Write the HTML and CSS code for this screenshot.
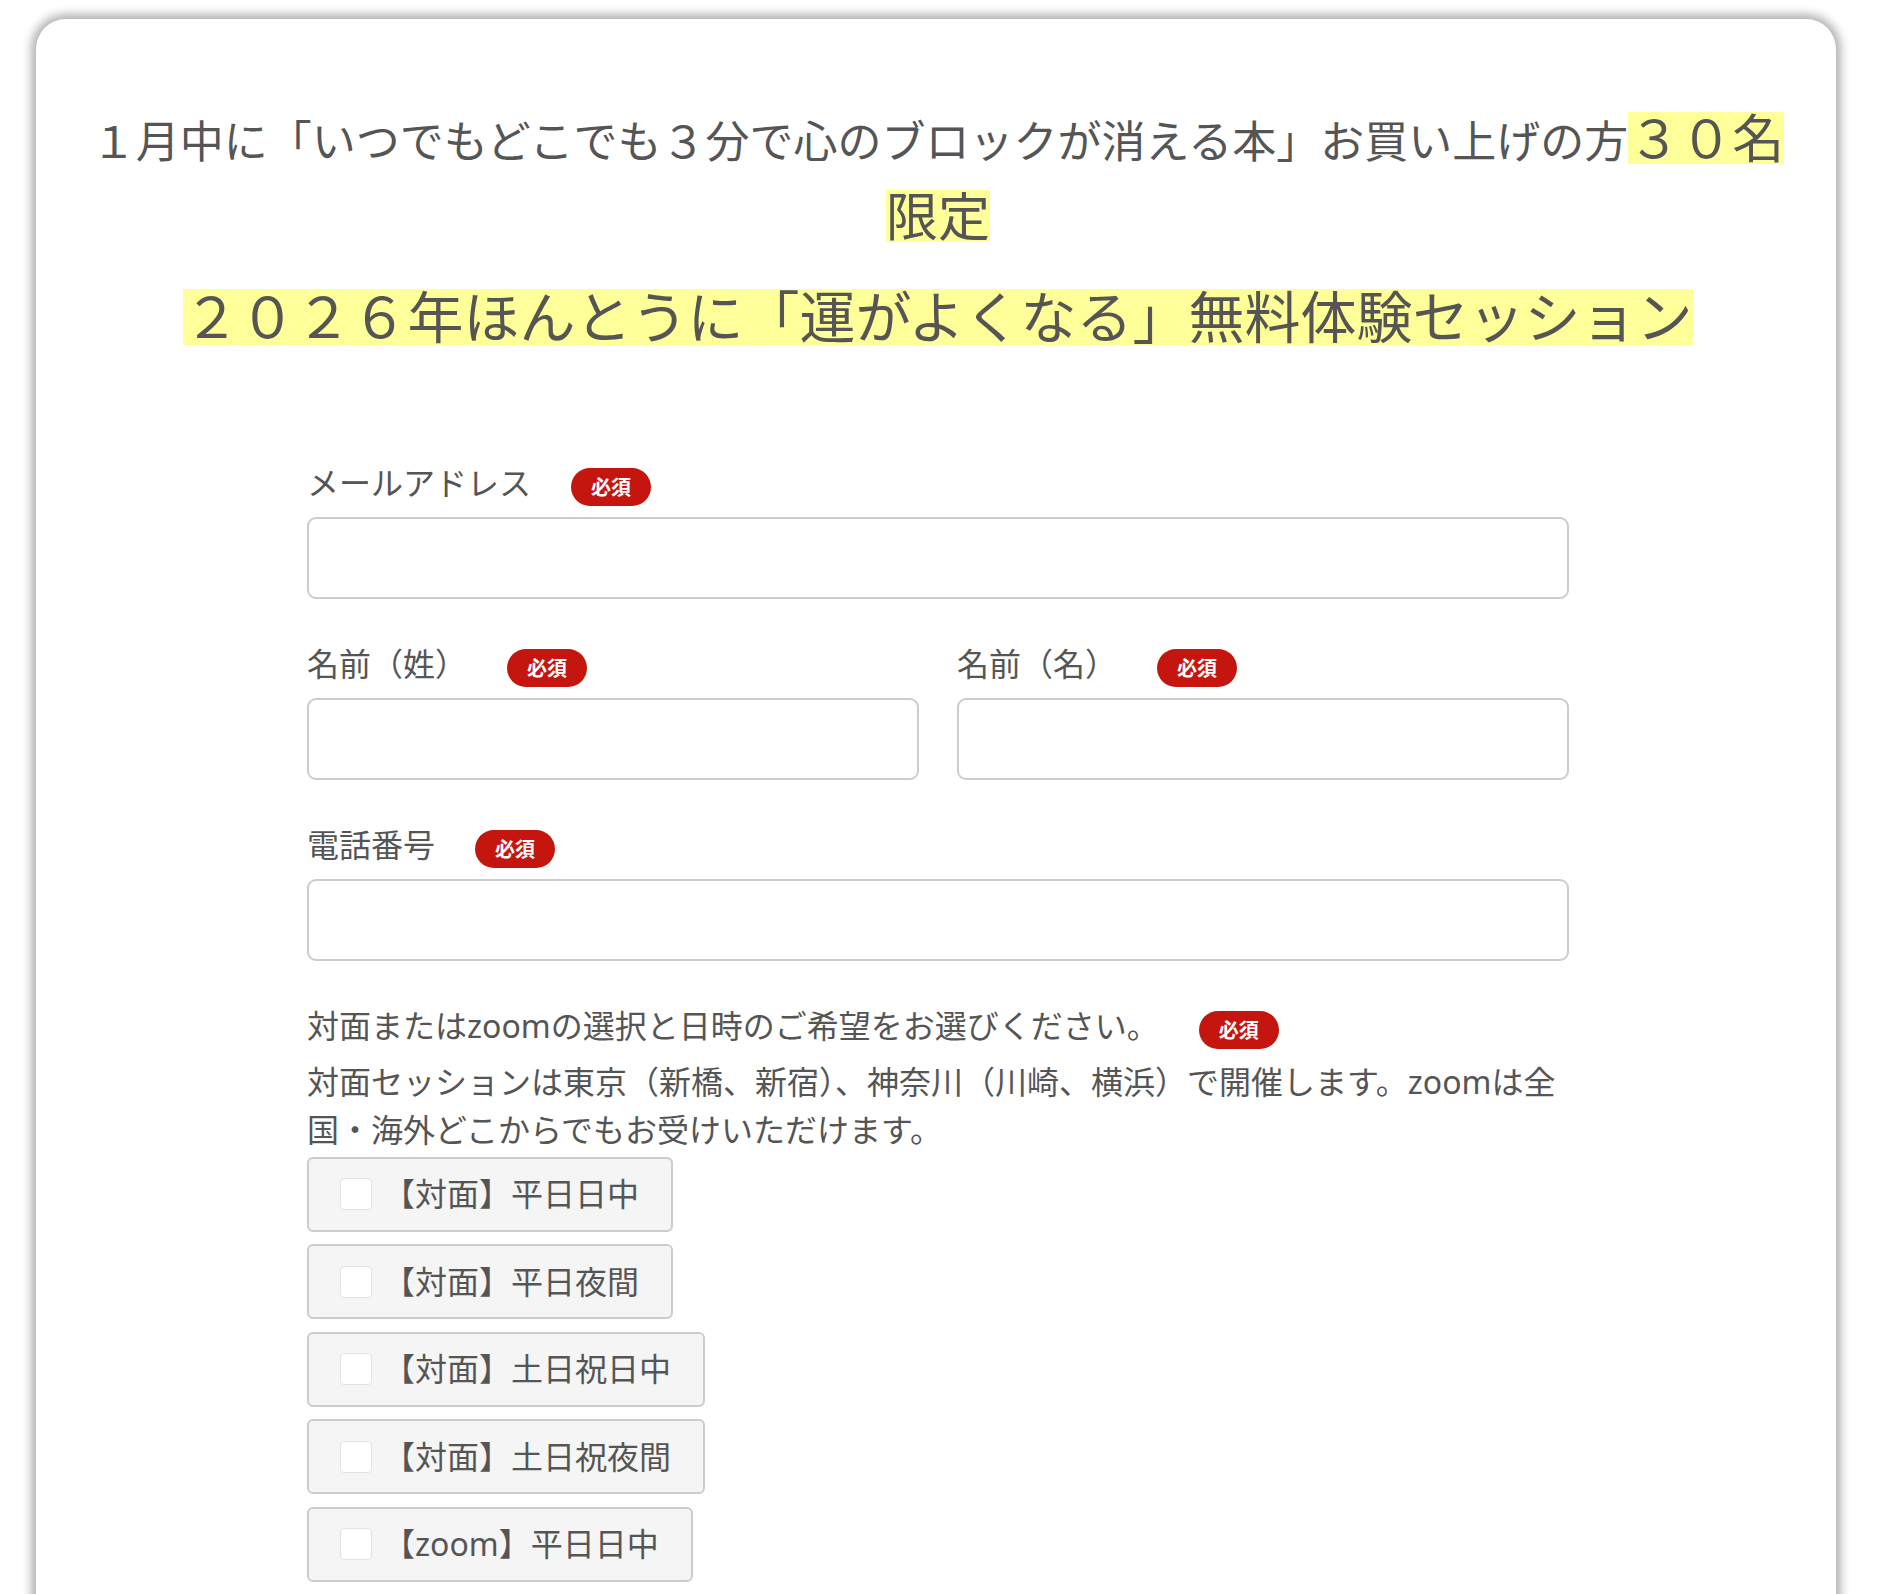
FILE: index.html
```html
<!DOCTYPE html>
<html lang="ja">

<head>
    <meta charset="UTF-8">
    <meta name="viewport" content="width=device-width, initial-scale=1.0">
    <title>無料体験セッション お申し込み</title>
    <link rel="stylesheet" href="styles.css">
</head>

<body>
    <div class="card">
        <p class="lead">１月中に「いつでもどこでも３分で心のブロックが消える本」お買い上げの方<span class="marker">３０名限定</span></p>
        <h1 class="title"><span class="marker">２０２６年ほんとうに「運がよくなる」無料体験セッション</span></h1>

        <form class="form">
            <div class="field">
                <div class="label-row">
                    <label for="email">メールアドレス</label>
                    <span class="req">必須</span>
                </div>
                <input type="email" id="email" class="textbox">
            </div>

            <div class="cols">
                <div class="field">
                    <div class="label-row">
                        <label for="sei">名前（姓）</label>
                        <span class="req">必須</span>
                    </div>
                    <input type="text" id="sei" class="textbox">
                </div>
                <div class="field">
                    <div class="label-row">
                        <label for="mei">名前（名）</label>
                        <span class="req">必須</span>
                    </div>
                    <input type="text" id="mei" class="textbox">
                </div>
            </div>

            <div class="field">
                <div class="label-row">
                    <label for="tel">電話番号</label>
                    <span class="req">必須</span>
                </div>
                <input type="tel" id="tel" class="textbox">
            </div>

            <div class="field">
                <div class="label-row choice-head">
                    <span>対面またはzoomの選択と日時のご希望をお選びください。</span>
                    <span class="req">必須</span>
                </div>
                <p class="note">対面セッションは東京（新橋、新宿）、神奈川（川崎、横浜）で開催します。zoomは全国・海外どこからでもお受けいただけます。</p>
                <div class="choices">
                    <label class="choice"><input type="checkbox" name="plan">【対面】平日日中</label>
                    <label class="choice"><input type="checkbox" name="plan">【対面】平日夜間</label>
                    <label class="choice"><input type="checkbox" name="plan">【対面】土日祝日中</label>
                    <label class="choice"><input type="checkbox" name="plan">【対面】土日祝夜間</label>
                    <label class="choice"><input type="checkbox" name="plan">【zoom】平日日中</label>
                    <label class="choice"><input type="checkbox" name="plan">【zoom】平日夜間</label>
                    <label class="choice"><input type="checkbox" name="plan">【zoom】土日祝日中</label>
                    <label class="choice"><input type="checkbox" name="plan">【zoom】土日祝夜間</label>
                </div>
            </div>
        </form>
    </div>
</body>

</html>
```

FILE: styles.css
```css
body {
    margin: 0;
    background-color: #fff;
    color: #555;
    font-family: "Noto Sans", "Noto Sans CJK JP", sans-serif;
}

.card {
    width: 1800px;
    box-sizing: border-box;
    margin: 19px 0 0 36px;
    padding: 81px 48px 120px 52px;
    background-color: #fff;
    border-radius: 30px;
    box-shadow: 0 0 10px 5px rgba(0, 0, 0, 0.3);
}

/* heading */
.lead {
    margin: 0;
    text-align: center;
    font-family: "Noto Sans CJK JP", sans-serif;
    font-size: 44px;
    line-height: 78px;
}

.lead .marker {
    font-size: 52px;
    line-height: 67.6px;
}

.marker {
    background: linear-gradient(transparent 19.3%, #ffff99 19.3%, #ffff99 88.4%, transparent 88.4%);
}

.title {
    margin: 16px 0 0;
    text-align: center;
    font-family: "Noto Sans CJK JP", sans-serif;
    font-size: 56px;
    line-height: 84px;
    font-weight: normal;
}

/* form */
.form {
    width: 1262px;
    margin: 103px auto 0;
    font-size: 32px;
    line-height: 1.5;
}

.field {
    margin-bottom: 41px;
}

.label-row {
    display: flex;
    align-items: flex-start;
    height: 48px;
    margin-bottom: 10px;
}

.req {
    display: flex;
    align-items: center;
    justify-content: center;
    width: 80px;
    height: 38px;
    margin: 9px 0 0 40px;
    border-radius: 19px;
    background-color: #c4160f;
    color: #fff;
    font-family: "Noto Sans CJK JP", sans-serif;
    font-size: 20px;
    font-weight: bold;
    line-height: 1;
}

.textbox {
    display: block;
    width: 100%;
    height: 82px;
    box-sizing: border-box;
    border: 2px solid #ccc;
    border-radius: 9px;
    background-color: #fff;
}

.cols {
    display: grid;
    grid-template-columns: 1fr 1fr;
    column-gap: 38px;
}

.choice-head {
    margin-bottom: 8px;
}

.note {
    margin: 0 0 2.5px;
}

.choices {
    display: flex;
    flex-direction: column;
    align-items: flex-start;
    gap: 12.5px;
}

.choice {
    display: flex;
    align-items: center;
    height: 75px;
    box-sizing: border-box;
    padding: 0 32px 0 31px;
    background-color: #f5f5f5;
    border: 2px solid #ccc;
    border-radius: 6px;
}

.choice input {
    appearance: none;
    width: 32px;
    height: 32px;
    margin: 0 11px 0 0;
    background-color: #fff;
    border: 1px solid #e3e3e3;
    border-radius: 4px;
}
```
